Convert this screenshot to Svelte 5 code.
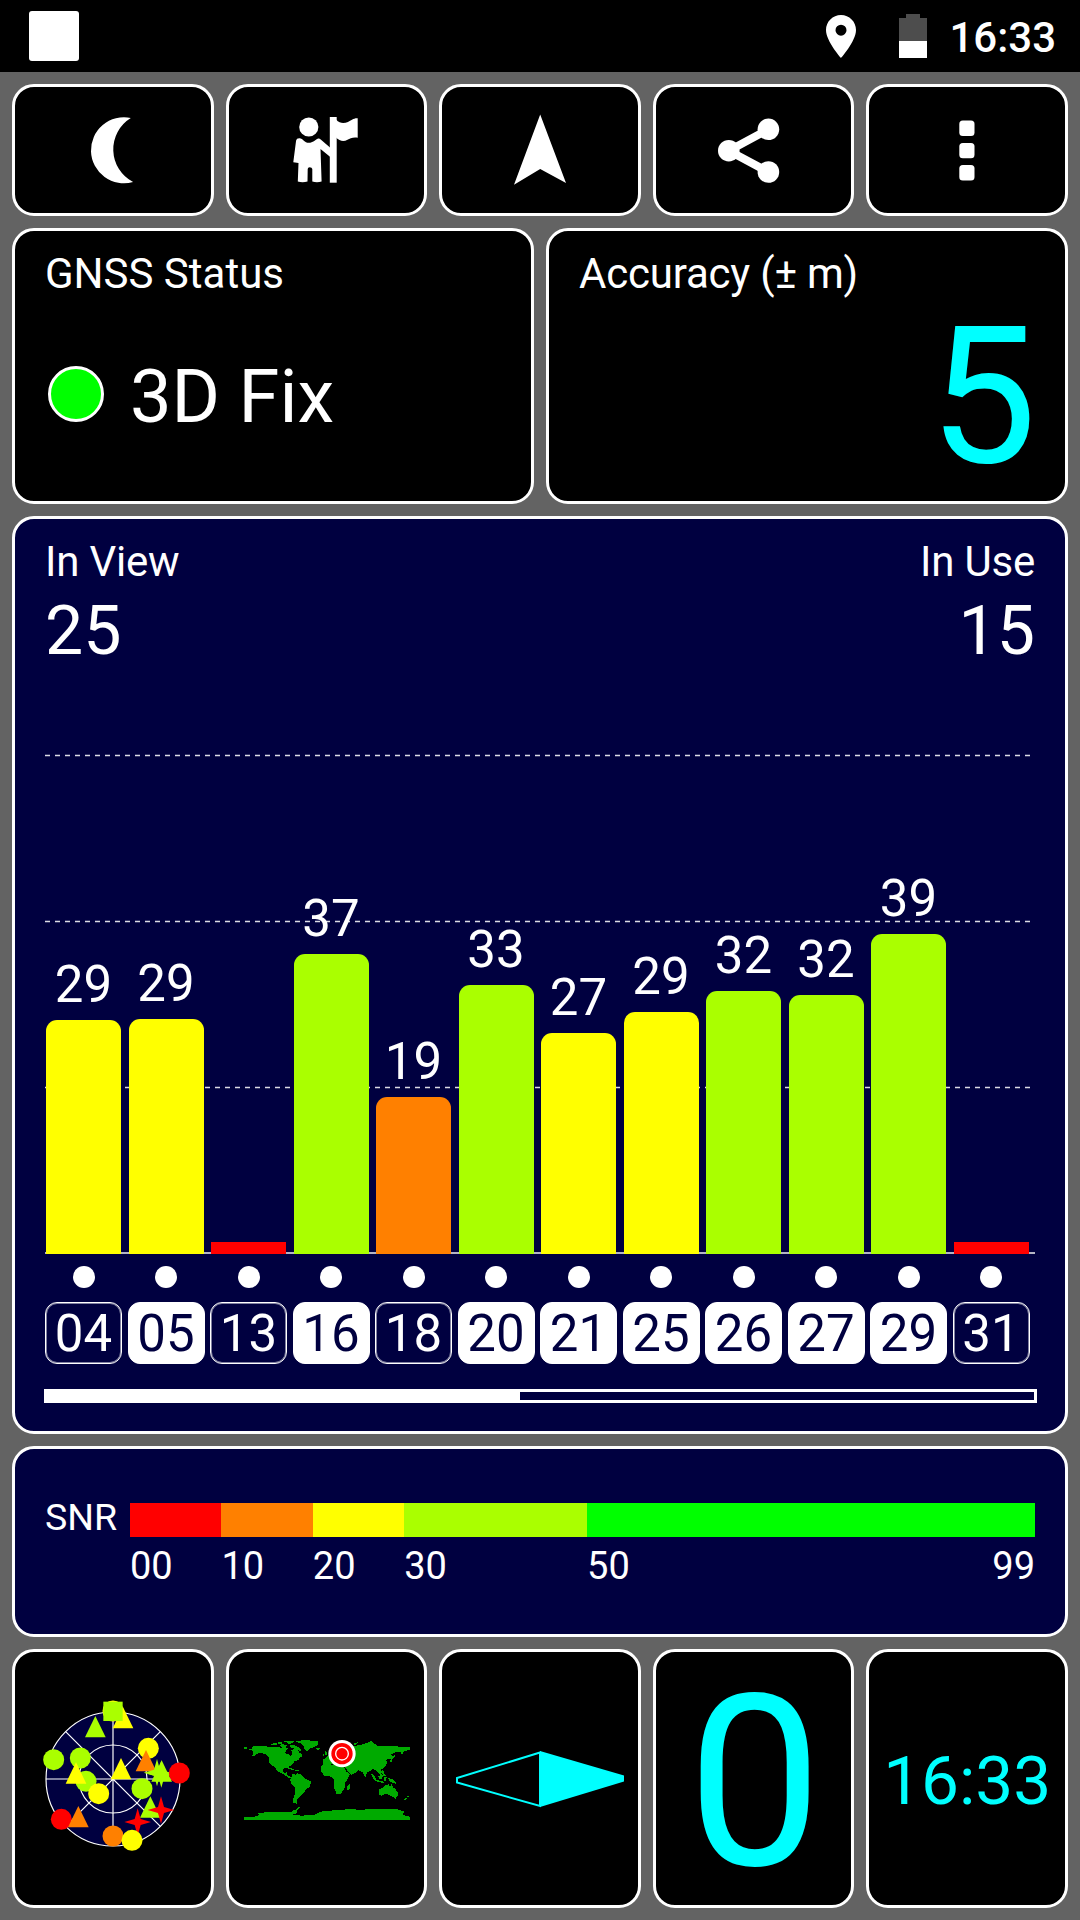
<script lang="ts">
  interface Satellite {
    id: string;
    snr: number | null;
    height: number;
    used: boolean;
  }

  const satellites: Satellite[] = [
    { id: "04", snr: 29, height: 234, used: false },
    { id: "05", snr: 29, height: 235, used: true },
    { id: "13", snr: null, height: 12, used: false },
    { id: "16", snr: 37, height: 300, used: true },
    { id: "18", snr: 19, height: 157, used: false },
    { id: "20", snr: 33, height: 269, used: true },
    { id: "21", snr: 27, height: 221, used: true },
    { id: "25", snr: 29, height: 242, used: true },
    { id: "26", snr: 32, height: 263, used: true },
    { id: "27", snr: 32, height: 259, used: true },
    { id: "29", snr: 39, height: 320, used: true },
    { id: "31", snr: null, height: 12, used: false },
  ];

  const scale = [
    { from: "00", span: 10, level: "none" },
    { from: "10", span: 10, level: "weak" },
    { from: "20", span: 10, level: "fair" },
    { from: "30", span: 20, level: "good" },
    { from: "50", span: 49, level: "best" },
  ];

  // sky plot markers, relative to the zenith
  const sky = [
    { shape: "circle", x: 0, y: -204, level: "fair" },
    { shape: "triangle", x: 30, y: -184, level: "fair" },
    { shape: "square", x: 0, y: -203, level: "good" },
    { shape: "triangle", x: -53, y: -157, level: "good" },
    { shape: "circle", x: 106, y: -92, level: "fair" },
    { shape: "triangle", x: 99, y: -55, level: "weak" },
    { shape: "circle", x: -98, y: -63, level: "good" },
    { shape: "circle", x: -178, y: -58, level: "good" },
    { shape: "circle", x: -81, y: 7, level: "good" },
    { shape: "triangle", x: -111, y: -18, level: "fair" },
    { shape: "circle", x: -43, y: 44, level: "fair" },
    { shape: "triangle", x: 24, y: -31, level: "fair" },
    { shape: "circle", x: 87, y: 29, level: "good" },
    { shape: "star", x: 132, y: -19, level: "good" },
    { shape: "star", x: 145, y: -15, level: "good" },
    { shape: "triangle", x: 146, y: -24, level: "good" },
    { shape: "circle", x: 199, y: -18, level: "none" },
    { shape: "triangle", x: 112, y: 84, level: "good" },
    { shape: "star", x: 144, y: 93, level: "none" },
    { shape: "star", x: 74, y: 129, level: "none" },
    { shape: "circle", x: -155, y: 121, level: "none" },
    { shape: "triangle", x: -104, y: 113, level: "weak" },
    { shape: "circle", x: 0, y: 171, level: "weak" },
    { shape: "circle", x: 57, y: 184, level: "fair" },
  ];

  function levelOf(snr: number | null) {
    if (snr === null || snr < 10) return "none";
    if (snr < 20) return "weak";
    if (snr < 30) return "fair";
    if (snr < 50) return "good";
    return "best";
  }
</script>

<div class="screen">
  <header class="status-bar">
    <div class="notification"></div>
    <div class="system">
      <svg class="pin" viewBox="0 0 30 43">
        <path
          fill-rule="evenodd"
          d="M15 0C6.700 0 0 6.700 0 15c0 11.200 15 28 15 28s15-16.800 15-28C30 6.700 23.300 0 15 0zm0 9.700a5.500 5.500 0 1 1 0 11 5.500 5.500 0 0 1 0-11z"
        />
      </svg>
      <svg class="battery" viewBox="0 0 28 44">
        <path fill="#4d4d4d" d="M7 0h14v4h7v24H0V4h7z" />
        <path d="M0 27h28v17H0z" />
      </svg>
      <span class="time">16:33</span>
    </div>
  </header>

  <main class="panels">
    <nav class="row five toolbar">
      <button class="card" aria-label="Night mode">
        <svg class="icon" viewBox="0 0 66 66">
          <path d="M50.800 1A33 33 0 1 0 53.100 65A36.800 36.800 0 0 1 50.800 1z" />
        </svg>
      </button>
      <button class="card" aria-label="Waypoints">
        <svg class="icon" viewBox="0 0 66 66">
          <circle cx="15.800" cy="10" r="9.600" />
          <path d="M36.800 0h6.900v65.700h-6.900z" />
          <path
            d="M43 2.500C49 9 55 5 59 2.700C61 1.500 63 1 64.700 1.300V20.700C60 19.700 57 21.500 54.500 22.800C50.500 25 46.500 24 43 20.500z"
          />
          <path
            d="M3.100 23.500Q3.600 21 6.500 21.200C10 21.500 11.500 25.800 15.800 25.800C20 25.800 22 22.800 25.200 21.500Q26.500 21.300 28 22.800L37 30.500V39.700L27.500 32L28.600 64.400Q24 66 19.300 64.400V52Q19 50.300 16.700 50.300Q14.700 50.300 14.700 52L14.500 64.400Q9.500 66 4.800 64.400L5.500 46L0.300 45.200z"
          />
        </svg>
      </button>
      <button class="card" aria-label="Navigate">
        <svg class="icon" viewBox="0 0 66 66">
          <path d="M33.200 -2.500L59 66L33.200 52L7 67.700z" />
        </svg>
      </button>
      <button class="card" aria-label="Share">
        <svg class="icon" viewBox="0 0 66 66">
          <path class="link" d="M47.400 12.300L7.800 33.700L47.400 55" />
          <circle cx="7.800" cy="33.700" r="10.800" />
          <circle cx="47.400" cy="12.300" r="10.800" />
          <circle cx="47.400" cy="55" r="10.800" />
        </svg>
      </button>
      <button class="card" aria-label="More">
        <svg class="icon" viewBox="0 0 66 66">
          <rect x="25.300" y="3.500" width="15.200" height="15.500" rx="3.500" />
          <rect x="25.300" y="26" width="15.200" height="15.200" rx="3.500" />
          <rect x="25.300" y="48" width="15.200" height="15.500" rx="3.500" />
        </svg>
      </button>
    </nav>

    <div class="row two">
      <section class="card summary">
        <div class="label">GNSS Status</div>
        <div class="fix">
          <span class="lamp"></span>
          <span>3D Fix</span>
        </div>
      </section>
      <section class="card summary">
        <div class="label tight">Accuracy (± m)</div>
        <div class="accuracy">5</div>
      </section>
    </div>

    <section class="card navy signals">
      <div class="counts">
        <div>
          <div class="label tight">In View</div>
          <div class="count">25</div>
        </div>
        <div class="right">
          <div class="label tight">In Use</div>
          <div class="count">15</div>
        </div>
      </div>

      <div class="plot">
        <svg class="grid" viewBox="0 0 990 499">
          <path class="dash" d="M0 .5H987M0 166.500H987M0 332.500H987" />
        </svg>
        <div class="bars">
          {#each satellites as sat}
            <div class="slot">
              {#if sat.snr !== null}
                <span class="value">{sat.snr}</span>
              {/if}
              <div
                class="bar {levelOf(sat.snr)}"
                class:flat={sat.snr === null}
                style="height: {sat.height}px"
              ></div>
            </div>
          {/each}
        </div>
      </div>

      <div class="ids">
        {#each satellites as sat}
          <div class="sat">
            <span class="dot"></span>
            <span class="badge" class:used={sat.used}>{sat.id}</span>
          </div>
        {/each}
      </div>

      <div class="pager"><div class="pager-fill"></div></div>
    </section>

    <section class="card navy snr">
      <div class="snr-label">SNR</div>
      <div class="legend">
        {#each scale as step}
          <div class="step" style="flex-grow: {step.span}">
            <div class="swatch {step.level}"></div>
            <div class="ticks">
              <span>{step.from}</span>
              {#if step.level === "best"}<span>99</span>{/if}
            </div>
          </div>
        {/each}
      </div>
    </section>

    <div class="row five tiles">
      <div class="card">
        <svg class="sky" viewBox="-240 -240 480 480">
          <circle class="horizon" r="201" />
          <circle class="ring" r="102" />
          <path
            class="ring"
            d="M-201 0H201M0 -201V201M-142 -142L142 142M-142 142L142 -142"
          />
          {#each sky as item}
            <g class={item.level} transform="translate({item.x} {item.y})">
              {#if item.shape === "circle"}
                <circle r="31.500" />
              {:else if item.shape === "triangle"}
                <path d="M0 -32L31 32H-31z" />
              {:else if item.shape === "square"}
                <path d="M-29 -29H29V29H-29z" />
              {:else}
                <path d="M0 -41L9 -9L40 0L9 9L0 41L-9 9L-40 0L-9 -9z" />
              {/if}
            </g>
          {/each}
        </svg>
      </div>
      <div class="card">
        <svg class="world" viewBox="40 120 498 240">
          <g class="land">
            <!-- North America -->
            <path
              d="M40 142h10v5h-8zM55 146h8v4h-8zM64 148v-8l14-2h26l16 4 15-2 15 3 15-2 8 5-8 6-1 7 9 4 6 6 5-7-2-12 10-4 10 4 3 8 10 5-1 8-10 3 2 5-14 5-11 12-7 5v8l-4-6-12 3-2 8 6 5 7-3-1 9 10 3 4 6-8 0-12-9-14-7-8-5-6-11-11-5-7-9-2-16-9-9-16-5-12 5-6 6h-10l8-7z"
            />
            <path
              d="M120 134l12-6h8l-3 8zM142 126h12v6h-10zM160 124l10-2h22l-6 8-12 1-6-4zM146 135l8-3 16 5-6 4-14-1zM176 137l10-3 12 4 10 8 5 8-8-2-12-6-8-1z"
            />
            <path d="M193 125l20-4 50 1-2 14-14 6-10 4-9 8-8-8-2-11-9-5z" />
            <path d="M256 145l6-2 8 2-4 4h-8zM174 205l10 0 10 6h-10zM192 210h12v4h-12z" />
            <path
              d="M186 222l8 2 6-4 14 5 8 11 20 8-5 17-11 7-6 11-12 10-8 7-2 15-10-3-1-11 6-17 0-18-11-12-4-10 4-9z"
            />
            <!-- Eurasia and Africa -->
            <path
              d="M278 188l0-11 8-3 5-8 10-5 4-15 14-20 14 3 20 10 24-2 20-4 14-5 12-3 10 7 8 5 50 2 46 2v9l-16 3-6 11-7-9-12 1-14 7 6 10-4 8-5-5-12 3 2 12-8 12-12 6 5 7-4 10-10-9-4-8-10-1-6 6-9 1-7 16-9-15-12-5-9 7-13 7-10-12-8-12z"
            />
            <path
              d="M278 190l20-2 4 8h22l16 4 6 14 12 8-6 14-8 10v16l-8 10-6 10-12 1-8-21 0-22-8-10-20-2-12-14v-12z"
            />
            <path d="M351 256l8-5-2 16-6 4-3-6z" />
            <path d="M282 153l5 2 3 10-8 1zM276 161h5v6h-5z" />
            <path
              d="M482 168l4 6-2 10-6 3 2-8zM366 133l8-5 10-1-8 8zM414 126l8-4 6 5-10 2zM455 211l6 2 0 8 6 8-5 1-7-10z"
            />
            <!-- Oceania -->
            <path
              d="M420 219l5 4 8 8 4 9 22 5v4l-18-3-8-4-8-11zM443 229l10-7 6 4-7 13-7-2zM461 231h7l-4 14-4-5zM470 234l14 3 8 6 7 10-12-4-8-4z"
            />
            <path
              d="M446 268l12-6 8-7 9-2 3 7 5-8 4 10 8 6 7 10-1 8-7 12-8-8-8-3-6-4-10-1-10 5-6-3z"
            />
            <path d="M485 172l7-6 0 6-5 4zM530 287l5 2-4 5zM520 297l8-4 1 3-7 4z" />
            <!-- Antarctica -->
            <path
              d="M40 360v-10h32l13-5-3-5 28-4 40 1 32 0 6-6 8-3 10-8 2 2-8 9-1 8-14 6 30 2 36-3 26-11 52-3 36-4 22 5 34-5 76 1 24 8-6 10 23 5v10z"
            />
          </g>
          <circle class="halo" cx="334" cy="161" r="41" />
          <circle class="target" cx="334" cy="161" r="32" />
          <circle class="target inner" cx="334" cy="161" r="19" />
        </svg>
      </div>
      <div class="card">
        <svg class="compass" viewBox="0 0 170 58">
          <path class="outline" d="M85 2.500L2 28v4.500L85 56z" />
          <path d="M85 1L169 25.500v6L85 57z" />
        </svg>
      </div>
      <div class="card"><span class="speed">0</span></div>
      <div class="card"><span class="clock">16:33</span></div>
    </div>
  </main>
</div>

<style>
  :global(body) {
    margin: 0;
    background: #636363;
  }

  .screen {
    width: 1080px;
    height: 1920px;
    display: flex;
    flex-direction: column;
    background: #636363;
    color: #fff;
    font-family: Roboto, "Liberation Sans", sans-serif;
    line-height: 1;
    overflow: hidden;
  }

  svg {
    display: block;
    flex: none;
    fill: #fff;
    overflow: visible;
  }

  .status-bar {
    height: 72px;
    box-sizing: border-box;
    padding: 0 24px 0 29px;
    display: flex;
    align-items: center;
    justify-content: space-between;
    background: #000;
  }

  .notification {
    width: 50px;
    height: 50px;
    border-radius: 3px;
    background: #fff;
  }

  .system {
    display: flex;
    align-items: center;
  }

  .pin {
    width: 30px;
    height: 43px;
    margin-right: 43px;
  }

  .battery {
    width: 28px;
    height: 44px;
    margin-right: 22px;
  }

  .time {
    font-size: 42px;
    font-weight: 500;
    padding-top: 4px;
  }

  .panels {
    flex: 1;
    padding: 12px;
    display: grid;
    grid-template-rows: 132px 275.700px 918.800px 190.600px 1fr;
    gap: 12px;
  }

  .row {
    display: grid;
    gap: 12px;
  }

  .five {
    grid-template-columns: repeat(5, 1fr);
  }

  .two {
    grid-template-columns: 1fr 1fr;
  }

  .card {
    box-sizing: border-box;
    min-width: 0;
    border: 3px solid #fff;
    border-radius: 22px;
    background: #000;
    color: inherit;
    font-family: inherit;
  }

  .navy {
    background: #000040;
  }

  .toolbar .card,
  .tiles .card {
    padding: 0;
    display: flex;
    align-items: center;
    justify-content: center;
  }

  .icon {
    width: 66px;
    height: 66px;
  }

  .link {
    fill: none;
    stroke: #fff;
    stroke-width: 8;
  }

  .summary,
  .signals {
    padding: 22px 30px 0;
    display: flex;
    flex-direction: column;
  }

  .label {
    font-size: 42px;
    white-space: nowrap;
  }

  .tight {
    letter-spacing: -0.200px;
  }

  .fix {
    display: flex;
    align-items: center;
    gap: 26px;
    margin-top: 65px;
    padding-left: 3px;
    font-size: 74px;
  }

  .lamp {
    width: 50px;
    height: 50px;
    margin-bottom: 6px;
    border: 3px solid #fff;
    border-radius: 50%;
    background: #0f0;
  }

  .accuracy {
    margin: 6px -2px 0 0;
    font-size: 192px;
    text-align: right;
    color: #0ff;
  }

  .counts {
    display: flex;
    justify-content: space-between;
  }

  .right {
    text-align: right;
  }

  .count {
    margin-top: 14px;
    font-size: 68px;
  }

  .plot {
    height: 499px;
    margin-top: 90px;
    display: grid;
    box-sizing: border-box;
    border-bottom: 2px solid #b4b4c4;
  }

  .grid,
  .bars {
    grid-area: 1 / 1;
  }

  .grid {
    width: 990px;
    height: 499px;
  }

  .dash {
    stroke: #dcdce6;
    stroke-width: 1.300;
    stroke-dasharray: 5 5;
  }

  .bars {
    display: flex;
    align-items: flex-end;
    z-index: 1;
  }

  .slot,
  .sat {
    width: 82.500px;
    box-sizing: border-box;
    padding-right: 5.500px;
    display: flex;
    flex-direction: column;
    align-items: center;
  }

  .value {
    margin-bottom: 10px;
    font-size: 51px;
  }

  .bar {
    width: 75px;
    border-radius: 11px 11px 0 0;
    background: currentColor;
  }

  .flat {
    border-radius: 0;
  }

  .none {
    color: #f00;
    fill: #f00;
  }

  .weak {
    color: #ff8000;
    fill: #ff8000;
  }

  .fair {
    color: #ff0;
    fill: #ff0;
  }

  .good {
    color: #af0;
    fill: #af0;
  }

  .best {
    color: #0f0;
  }

  .ids {
    display: flex;
    margin-top: 12px;
  }

  .dot {
    width: 22px;
    height: 22px;
    margin-bottom: 14px;
    border-radius: 50%;
    background: #fff;
  }

  .badge {
    width: 77px;
    height: 62px;
    box-sizing: border-box;
    border: 1px solid #fff;
    box-shadow: inset 0 0 0 1px rgba(255, 255, 255, 0.5);
    border-radius: 12px;
    font-size: 51px;
    line-height: 61px;
    text-align: center;
  }

  .used {
    background: #fff;
    color: #000040;
  }

  .pager {
    margin: 25px -2px 0 -1px;
    height: 14px;
    box-sizing: border-box;
    border: 3px solid #fff;
  }

  .pager-fill {
    width: 473px;
    height: 100%;
    background: #fff;
  }

  .snr {
    padding: 54px 30px 0;
    display: flex;
    font-size: 38px;
  }

  .snr-label {
    width: 85px;
    font-size: 37.500px;
    line-height: 29px;
  }

  .legend {
    flex: 1;
    display: flex;
  }

  .step {
    flex-basis: 0;
  }

  .swatch {
    height: 34px;
    background: currentColor;
  }

  .ticks {
    display: flex;
    justify-content: space-between;
    margin-top: 10px;
  }

  .sky {
    width: 160px;
    height: 160px;
  }

  .horizon,
  .ring {
    fill: none;
    stroke: #fff;
    stroke-width: 3.500;
  }

  .horizon {
    fill: #000040;
  }

  .world {
    width: 166px;
    height: 80px;
    margin: 3px 0 0 1px;
  }

  .land {
    fill: #0a0;
    shape-rendering: crispEdges;
  }

  .halo {
    fill: #fff;
  }

  .target {
    fill: #f00;
  }

  .inner {
    stroke: #fff;
    stroke-width: 4;
  }

  .compass {
    width: 170px;
    height: 58px;
    fill: #0ff;
  }

  .outline {
    fill: none;
    stroke: #0ff;
    stroke-width: 2;
  }

  .speed {
    padding: 8px 0 0 2px;
    font-size: 240px;
    color: #0ff;
  }

  .clock {
    padding-top: 4px;
    font-size: 67.500px;
    color: #0ff;
  }
</style>
